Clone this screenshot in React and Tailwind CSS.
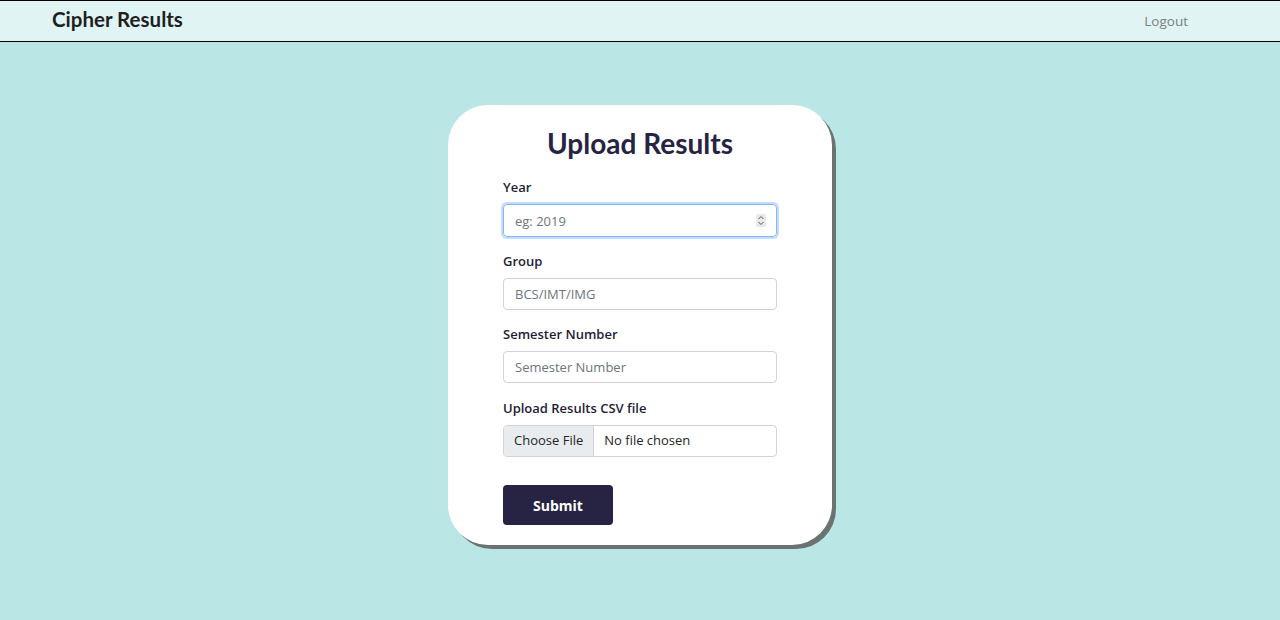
import React from "react";

const sans = "font-['Open_Sans','Liberation_Sans',sans-serif]";

function Field({ label, children, last }) {
  return (
    <div className={last ? "mb-[28px]" : "mb-[12px]"}>
      <label className="block text-[13px] leading-[24px] font-semibold text-[#1f1d36] mb-[5px]">
        {label}
      </label>
      {children}
    </div>
  );
}

export default function App() {
  return (
    <div className={`min-h-[620px] bg-[#bae6e6] ${sans}`}>
      {/* Navbar */}
      <nav className="h-[42px] bg-[#e1f4f4] border-t border-b border-black flex items-center justify-between pl-[52px] pr-[92px]">
        <span className="text-[20.5px] font-bold text-[#1f1f1f] font-['Lato','Open_Sans',sans-serif] -mt-[3px]">
          Cipher Results
        </span>
        <a className="text-[13.5px] text-[#7b7f80]">Logout</a>
      </nav>

      {/* Card */}
      <div className="flex justify-center pt-[63px]">
        <div className="w-[384px] bg-white rounded-[40px] shadow-[4px_4px_0_0_#6b7371] px-[55px] pt-[18px] pb-[20px]">
          <h1 className="text-center text-[28px] leading-[40px] font-bold text-[#262343] font-['Lato','Open_Sans',sans-serif] mb-[12px]">
            Upload Results
          </h1>

          <Field label="Year">
            <div className="relative">
              <input
                readOnly
                placeholder="eg: 2019"
                className="w-full h-[33px] rounded-[4px] border border-[#86b7fe] shadow-[0_0_0_2px_#c2dbfe] px-[11px] text-[13px] text-[#212529] placeholder-[#6c757d] outline-none"
              />
              <div className="absolute right-[11px] top-[10px] w-[10px] h-[13px] bg-[#e9e9e9] rounded-[2px] flex items-center justify-center">
                <svg width="8" height="11" viewBox="0 0 8 11" fill="none" stroke="#555" strokeWidth="1">
                  <path d="M1.5 4 L4 1.5 L6.5 4" />
                  <path d="M1.5 7 L4 9.5 L6.5 7" />
                </svg>
              </div>
            </div>
          </Field>

          <Field label="Group">
            <input
              readOnly
              placeholder="BCS/IMT/IMG"
              className="w-full h-[32px] rounded-[4px] border border-[#ced4da] px-[11px] text-[13px] text-[#212529] placeholder-[#6c757d] outline-none"
            />
          </Field>

          <Field label="Semester Number">
            <input
              readOnly
              placeholder="Semester Number"
              className="w-full h-[32px] rounded-[4px] border border-[#ced4da] px-[11px] text-[13px] text-[#212529] placeholder-[#6c757d] outline-none"
            />
          </Field>

          <div className="h-[1px]" />

          <Field label="Upload Results CSV file" last>
            <div className="flex h-[32px] rounded-[4px] border border-[#ced4da] overflow-hidden text-[13px] text-[#212529]">
              <div className="bg-[#e9ecef] border-r border-[#ced4da] px-[10px] flex items-center">
                Choose File
              </div>
              <div className="px-[10px] flex items-center">No file chosen</div>
            </div>
          </Field>

          <button className="w-[110px] h-[40px] bg-[#262343] text-white text-[14px] font-bold rounded-[4px]">
            Submit
          </button>
        </div>
      </div>
    </div>
  );
}
